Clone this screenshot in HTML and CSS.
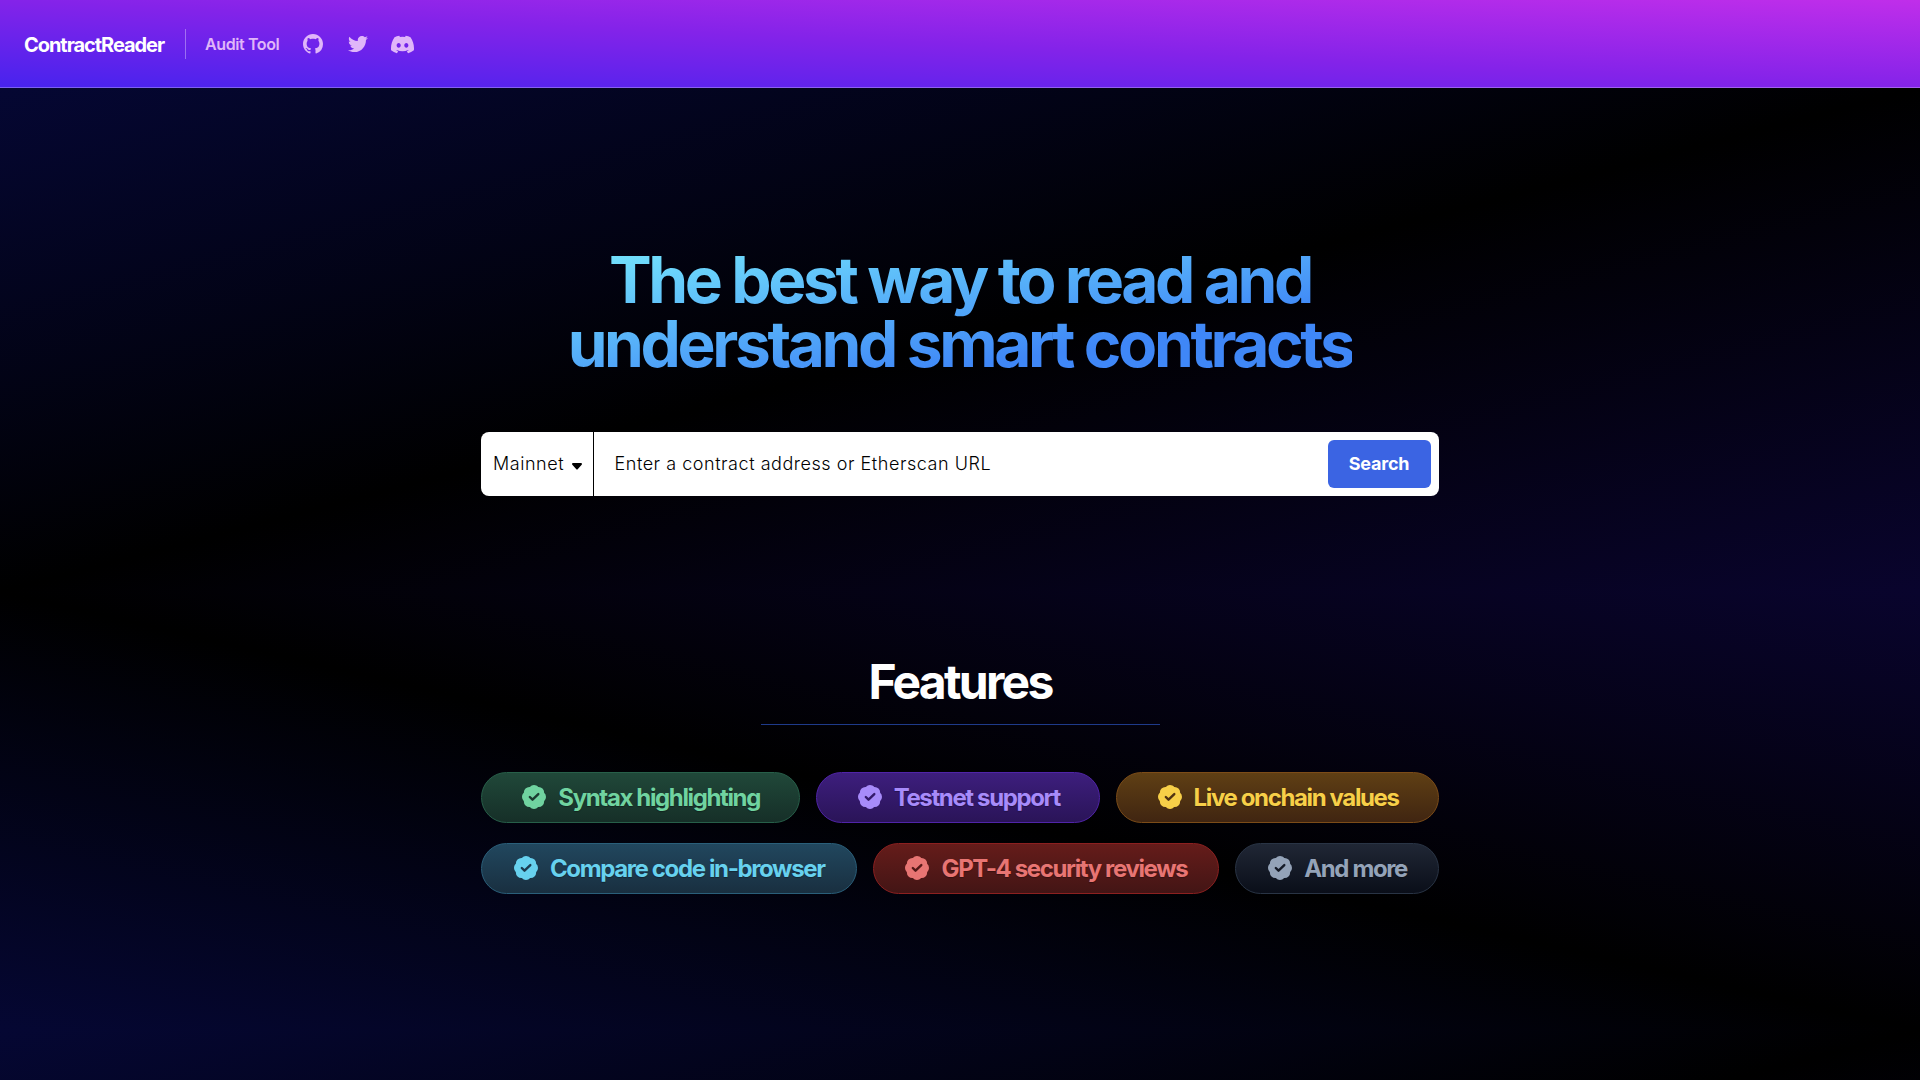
FILE: index.html
```html
<!DOCTYPE html>
<html lang="en">
<head>
<meta charset="utf-8">
<title>ContractReader</title>
<link rel="stylesheet" href="styles.css">
</head>
<body>
<svg class="sprite" aria-hidden="true">
  <mask id="check">
    <rect width="24" height="24" fill="#fff"/>
    <path d="M8.6 12l2.2 2.2 4.7-4.6" fill="none" stroke="#000" stroke-width="1.95" stroke-linecap="round" stroke-linejoin="round"/>
  </mask>
  <symbol id="badge" viewBox="2.25 2.25 19.5 19.5"><path mask="url(#check)" d="M8.603 3.799A4.49 4.49 0 0112 2.25c1.357 0 2.573.6 3.397 1.549a4.49 4.49 0 013.498 1.307 4.491 4.491 0 011.307 3.497A4.49 4.49 0 0121.75 12a4.49 4.49 0 01-1.549 3.397 4.491 4.491 0 01-1.307 3.497 4.491 4.491 0 01-3.497 1.307A4.49 4.49 0 0112 21.75a4.49 4.49 0 01-3.397-1.549 4.49 4.49 0 01-3.498-1.306 4.491 4.491 0 01-1.307-3.498A4.49 4.49 0 012.25 12c0-1.357.6-2.573 1.549-3.397a4.49 4.49 0 011.307-3.497 4.49 4.49 0 013.497-1.307z"/></symbol>
</svg>
<header class="navbar">
  <a class="brand">ContractReader</a>
  <nav class="links">
    <a class="link">Audit Tool</a>
    <a class="icon-link"><svg class="icon" viewBox="0 0 16 16"><path d="M8 0C3.58 0 0 3.58 0 8c0 3.54 2.29 6.53 5.47 7.59.4.07.55-.17.55-.38 0-.19-.01-.82-.01-1.49-2.01.37-2.53-.49-2.69-.94-.09-.23-.48-.94-.82-1.13-.28-.15-.68-.52-.01-.53.63-.01 1.08.58 1.23.82.72 1.21 1.87.87 2.33.66.07-.52.28-.87.51-1.07-1.78-.2-3.64-.89-3.64-3.95 0-.87.31-1.59.82-2.15-.08-.2-.36-1.02.08-2.12 0 0 .67-.21 2.2.82.64-.18 1.32-.27 2-.27s1.36.09 2 .27c1.53-1.04 2.2-.82 2.2-.82.44 1.1.16 1.92.08 2.12.51.56.82 1.27.82 2.15 0 3.07-1.87 3.75-3.65 3.95.29.25.54.73.54 1.48 0 1.07-.01 1.93-.01 2.2 0 .21.15.46.55.38A8.01 8.01 0 0 0 16 8c0-4.42-3.58-8-8-8z"/></svg></a>
    <a class="icon-link"><svg class="icon" viewBox="0 0 512 512"><path d="M459.37 151.716c.325 4.548.325 9.097.325 13.645 0 138.72-105.583 298.558-298.558 298.558-59.452 0-114.68-17.219-161.137-47.106 8.447.974 16.568 1.299 25.34 1.299 49.055 0 94.213-16.568 130.274-44.832-46.132-.975-84.792-31.188-98.112-72.772 6.498.974 12.995 1.624 19.818 1.624 9.421 0 18.843-1.3 27.614-3.573-48.081-9.747-84.143-51.98-84.143-102.985v-1.299c13.969 7.797 30.214 12.67 47.431 13.319-28.264-18.843-46.781-51.005-46.781-87.391 0-19.492 5.197-37.36 14.294-52.954 51.655 63.675 129.3 105.258 216.365 109.807-1.624-7.797-2.599-15.918-2.599-24.04 0-57.828 46.782-104.934 104.934-104.934 30.213 0 57.502 12.67 76.67 33.137 23.715-4.548 46.456-13.32 66.599-25.34-7.798 24.366-24.366 44.833-46.132 57.827 21.117-2.273 41.584-8.122 60.426-16.243-14.292 20.791-32.161 39.308-52.628 54.253z"/></svg></a>
    <a class="icon-link"><svg class="icon discord" viewBox="0 0 24 24"><path d="M20.317 4.37a19.79 19.79 0 0 0-4.885-1.515.074.074 0 0 0-.079.037c-.21.375-.444.864-.608 1.25a18.27 18.27 0 0 0-5.487 0 12.64 12.64 0 0 0-.617-1.25.077.077 0 0 0-.079-.037A19.736 19.736 0 0 0 3.677 4.37a.07.07 0 0 0-.032.027C.533 9.046-.32 13.58.099 18.057a.082.082 0 0 0 .031.057 19.9 19.9 0 0 0 5.993 3.03.078.078 0 0 0 .084-.028 14.09 14.09 0 0 0 1.226-1.994.076.076 0 0 0-.041-.106 13.107 13.107 0 0 1-1.872-.892.077.077 0 0 1-.008-.128c.126-.094.252-.192.372-.292a.074.074 0 0 1 .077-.01c3.928 1.793 8.18 1.793 12.062 0a.074.074 0 0 1 .078.01c.12.098.246.198.373.292a.077.077 0 0 1-.006.127 12.299 12.299 0 0 1-1.873.892.077.077 0 0 0-.041.107c.36.698.772 1.362 1.225 1.993a.076.076 0 0 0 .084.028 19.839 19.839 0 0 0 6.002-3.03.077.077 0 0 0 .032-.054c.5-5.177-.838-9.674-3.549-13.66a.061.061 0 0 0-.031-.03zM8.02 15.33c-1.183 0-2.157-1.085-2.157-2.419 0-1.333.956-2.419 2.157-2.419 1.21 0 2.176 1.096 2.157 2.42 0 1.333-.956 2.418-2.157 2.418zm7.975 0c-1.183 0-2.157-1.085-2.157-2.419 0-1.333.955-2.419 2.157-2.419 1.21 0 2.176 1.096 2.157 2.42 0 1.333-.946 2.418-2.157 2.418z"/></svg></a>
  </nav>
</header>
<main>
  <section class="hero">
    <h1 class="headline">The best way to read and<br>understand smart contracts</h1>
    <form class="search">
      <div class="network">Mainnet<svg class="caret" viewBox="0 0 10 7"><path d="M1 0h8a1 1 0 0 1 .7 1.7L5.9 6a1.2 1.2 0 0 1-1.8 0L.3 1.7A1 1 0 0 1 1 0z"/></svg></div>
      <div class="address">Enter a contract address or Etherscan URL</div>
      <button class="submit" type="button">Search</button>
    </form>
  </section>
  <section class="features">
    <h2 class="title">Features</h2>
    <div class="pills">
      <div class="pill green"><svg class="badge"><use href="#badge"/></svg>Syntax highlighting</div>
      <div class="pill violet"><svg class="badge"><use href="#badge"/></svg>Testnet support</div>
      <div class="pill yellow"><svg class="badge"><use href="#badge"/></svg>Live onchain values</div>
      <div class="pill cyan"><svg class="badge"><use href="#badge"/></svg>Compare code in-browser</div>
      <div class="pill red"><svg class="badge"><use href="#badge"/></svg>GPT-4 security reviews</div>
      <div class="pill slate"><svg class="badge"><use href="#badge"/></svg>And more</div>
    </div>
  </section>
  <section class="next"></section>
</main>
</body>
</html>
```
FILE: styles.css
```css
* { box-sizing: border-box; }
body {
  display: flex;
  flex-direction: column;
  height: 1080px;
  margin: 0;
  background: #000;
  color: #fff;
  font-family: Inter, "Liberation Sans", sans-serif;
}
.sprite { position: absolute; width: 0; height: 0; }
.navbar {
  display: flex;
  flex: none;
  align-items: center;
  height: 88px;
  padding: 1px 24px 0;
  border-bottom: 1px solid rgba(255, 255, 255, .28);
  background: linear-gradient(to top right, #4723ee, #8423e9, #c02eea) border-box;
}
.brand { padding-top: 2px; font-size: 20px; font-weight: 700; letter-spacing: -1.05px; line-height: 28px; }
.links {
  display: flex;
  align-items: center;
  height: 30px;
  margin-left: 21px;
  padding-left: 19px;
  border-left: 1px solid rgba(255, 255, 255, .35);
  color: #e0b6f9;
}
.link { font-size: 16px; font-weight: 600; letter-spacing: -.4px; margin-right: 23.5px; }
.icon-link { display: flex; justify-content: center; width: 20px; margin-right: 25px; }
.icon { flex: none; width: 20px; height: 20px; fill: currentColor; }
.discord { width: 23px; height: 23px; }

main { flex: 1; min-height: 0; overflow: hidden; }
.hero {
  display: flex;
  flex-direction: column;
  align-items: center;
  height: 504px;
  padding-top: 160px;
  background: linear-gradient(to bottom right, #050733, #000, #09042d);
}
.headline {
  margin: 0;
  font-size: 64px;
  font-weight: 700;
  line-height: 64px;
  letter-spacing: -3.38px;
  text-align: center;
  color: transparent;
  background: linear-gradient(to bottom right, #76e8fc, #3f87f7 72%);
  background-clip: text;
}
.search {
  display: flex;
  width: 958px;
  height: 64px;
  margin-top: 56px;
  border-radius: 8px;
  background: #fff;
  color: #000;
  font-size: 18px;
  font-weight: 300;
  letter-spacing: .54px;
}
.network {
  display: flex;
  align-items: center;
  width: 113px;
  padding: 0 0 2px 12px;
  border-right: 1px solid #000;
}
.caret { width: 10px; height: 7px; margin: 6px 0 0 7.5px; }
.address { flex: 1; padding-left: 20.5px; line-height: 64px; }
.submit {
  width: 103px;
  height: 48px;
  margin: 8px;
  padding: 0 1px 1px 0;
  border: 0;
  border-radius: 6px;
  background: #3b64e3;
  color: #fff;
  font: 700 18px Inter, sans-serif;
  letter-spacing: -.2px;
}

.features {
  display: flex;
  flex-direction: column;
  align-items: center;
  height: 438px;
  padding-top: 64px;
  background: linear-gradient(to bottom left, #09042d, #000, #050733);
}
.title {
  width: 399px;
  height: 69px;
  margin: 0 0 47px;
  border-bottom: 1px solid #1e3a8a;
  font-size: 48px;
  font-weight: 700;
  line-height: 51px;
  letter-spacing: -2.74px;
  text-align: center;
}
.pills { display: flex; flex-wrap: wrap; gap: 20px 16px; width: 958px; }
.pill {
  display: flex;
  flex: 1 0 auto;
  align-items: center;
  justify-content: center;
  height: 51px;
  padding: 0 24px 0 25px;
  border: 1px solid;
  border-radius: 26px;
  font-size: 24px;
  font-weight: 700;
  letter-spacing: -1.37px;
  text-shadow: 0 1px 1px rgba(0, 0, 0, .3);
}
.badge { width: 24px; height: 24px; margin: 0 12px 1px 0; fill: currentColor; }
.green { color: #70d3a0; border-color: #275f49; background: linear-gradient(#204839, #162f28); }
.violet { color: #a78bfa; border-color: #5024a8; background: linear-gradient(#3d1e7d, #2a1458); }
.yellow { color: #f7cf48; border-color: #7c4c18; background: linear-gradient(#5f3f14, #402511); }
.cyan { color: #67d1ee; border-color: #2a5f7a; background: linear-gradient(#21475e, #192f40); }
.red { color: #e87573; border-color: #8c2020; background: linear-gradient(#651c1a, #431515); }
.slate { color: #94a3b8; border-color: #293445; background: linear-gradient(#202735, #0a0e19); }
.next { height: 504px; background: linear-gradient(to bottom right, #050733, #000, #09042d); }
```
